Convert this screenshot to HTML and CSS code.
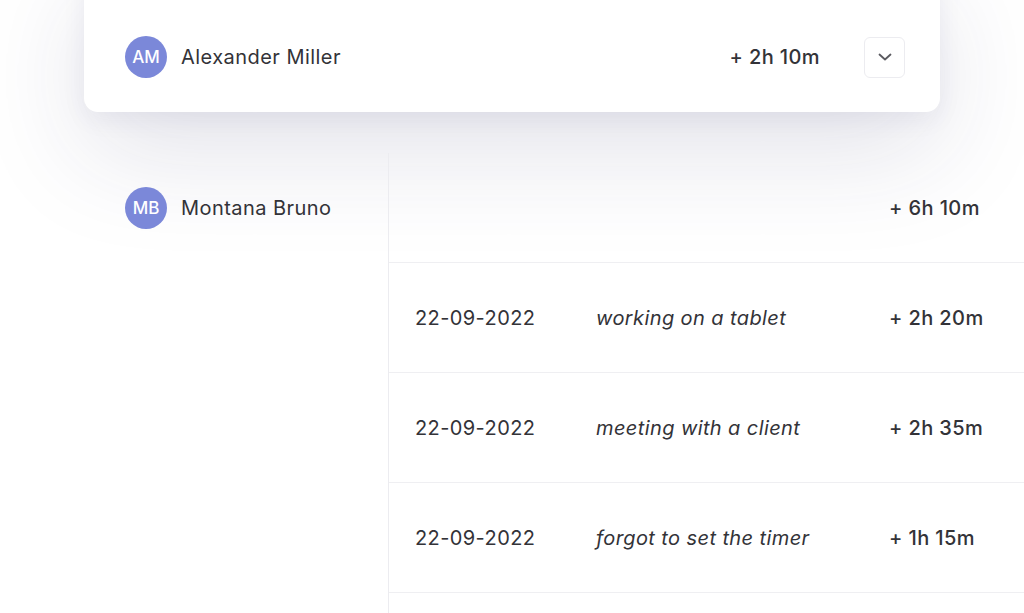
FILE: index.html
```html
<!DOCTYPE html>
<html>
<head>
<meta charset="utf-8">
<link rel="stylesheet" href="styles.css">
</head>
<body>
<div class="page">
  <div class="card">
    <div class="person">
      <div class="avatar">AM</div>
      <div class="name">Alexander Miller</div>
    </div>
    <div class="card-right">
      <div class="amount">+ 2h 10m</div>
      <button class="toggle" type="button">
        <svg width="16" height="16" viewBox="0 0 16 16"><path d="M2.5 5.5 L8 10.5 L13.5 5.5" fill="none" stroke="#5a5a60" stroke-width="1.8" stroke-linecap="round" stroke-linejoin="round"/></svg>
      </button>
    </div>
  </div>
  <div class="group">
    <div class="group-left">
      <div class="person person-head">
        <div class="avatar">MB</div>
        <div class="name">Montana Bruno</div>
      </div>
    </div>
    <div class="group-right">
      <div class="row row-head">
        <span></span><span></span><span class="amount">+ 6h 10m</span>
      </div>
      <div class="row">
        <span class="date">22-09-2022</span><span class="desc">working on a tablet</span><span class="amount">+ 2h 20m</span>
      </div>
      <div class="row">
        <span class="date">22-09-2022</span><span class="desc">meeting with a client</span><span class="amount">+ 2h 35m</span>
      </div>
      <div class="row">
        <span class="date">22-09-2022</span><span class="desc">forgot to set the timer</span><span class="amount">+ 1h 15m</span>
      </div>
      <div class="row">
        <span></span><span></span><span></span>
      </div>
    </div>
  </div>
</div>
</body>
</html>
```
FILE: styles.css
```css
* { box-sizing: border-box; }
html, body {
  margin: 0;
  padding: 0;
  background: #ffffff;
  overflow: hidden;
}
body {
  font-family: Inter, "Noto Sans", sans-serif;
  color: #333338;
  width: 1024px;
  height: 613px;
}
.page {
  width: 1024px;
  height: 613px;
  overflow: hidden;
}
.card {
  margin: -40px 0 0 84px;
  width: 856px;
  height: 152px;
  padding: 42px 35px 0 41px;
  background: #fff;
  border-radius: 14px;
  box-shadow: 0 40px 110px rgba(40, 40, 95, 0.13), 0 8px 24px rgba(40, 40, 95, 0.06);
  display: flex;
  align-items: center;
  justify-content: space-between;
}
.person {
  display: flex;
  align-items: center;
  gap: 14px;
}
.avatar {
  width: 42px;
  height: 42px;
  border-radius: 50%;
  background: #7b88d9;
  color: #fff;
  font-size: 17px;
  font-weight: 500;
  display: flex;
  align-items: center;
  justify-content: center;
}
.name {
  font-size: 20px;
  letter-spacing: 0.45px;
  color: #333338;
}
.card-right {
  display: flex;
  align-items: center;
  gap: 44px;
}
.amount {
  font-size: 20px;
  font-weight: 500;
  letter-spacing: 0.4px;
  color: #333338;
}
.toggle {
  width: 41px;
  height: 41px;
  border: 1px solid #ececf0;
  border-radius: 6px;
  background: #fff;
  display: flex;
  align-items: center;
  justify-content: center;
  padding: 0;
}
.group {
  margin-top: 41px;
  display: flex;
}
.group-left {
  width: 388px;
  padding-left: 125px;
}
.person-head {
  height: 110px;
}
.group-right {
  flex: 1;
  border-left: 1px solid #ececf0;
}
.row {
  height: 110px;
  border-bottom: 1px solid #efeff2;
  display: grid;
  grid-template-columns: 181px 293px 1fr;
  align-items: center;
  padding-left: 26px;
}
.date {
  font-size: 20px;
  letter-spacing: 0.4px;
}
.desc {
  font-size: 20px;
  font-style: italic;
  letter-spacing: 0.4px;
}
```
